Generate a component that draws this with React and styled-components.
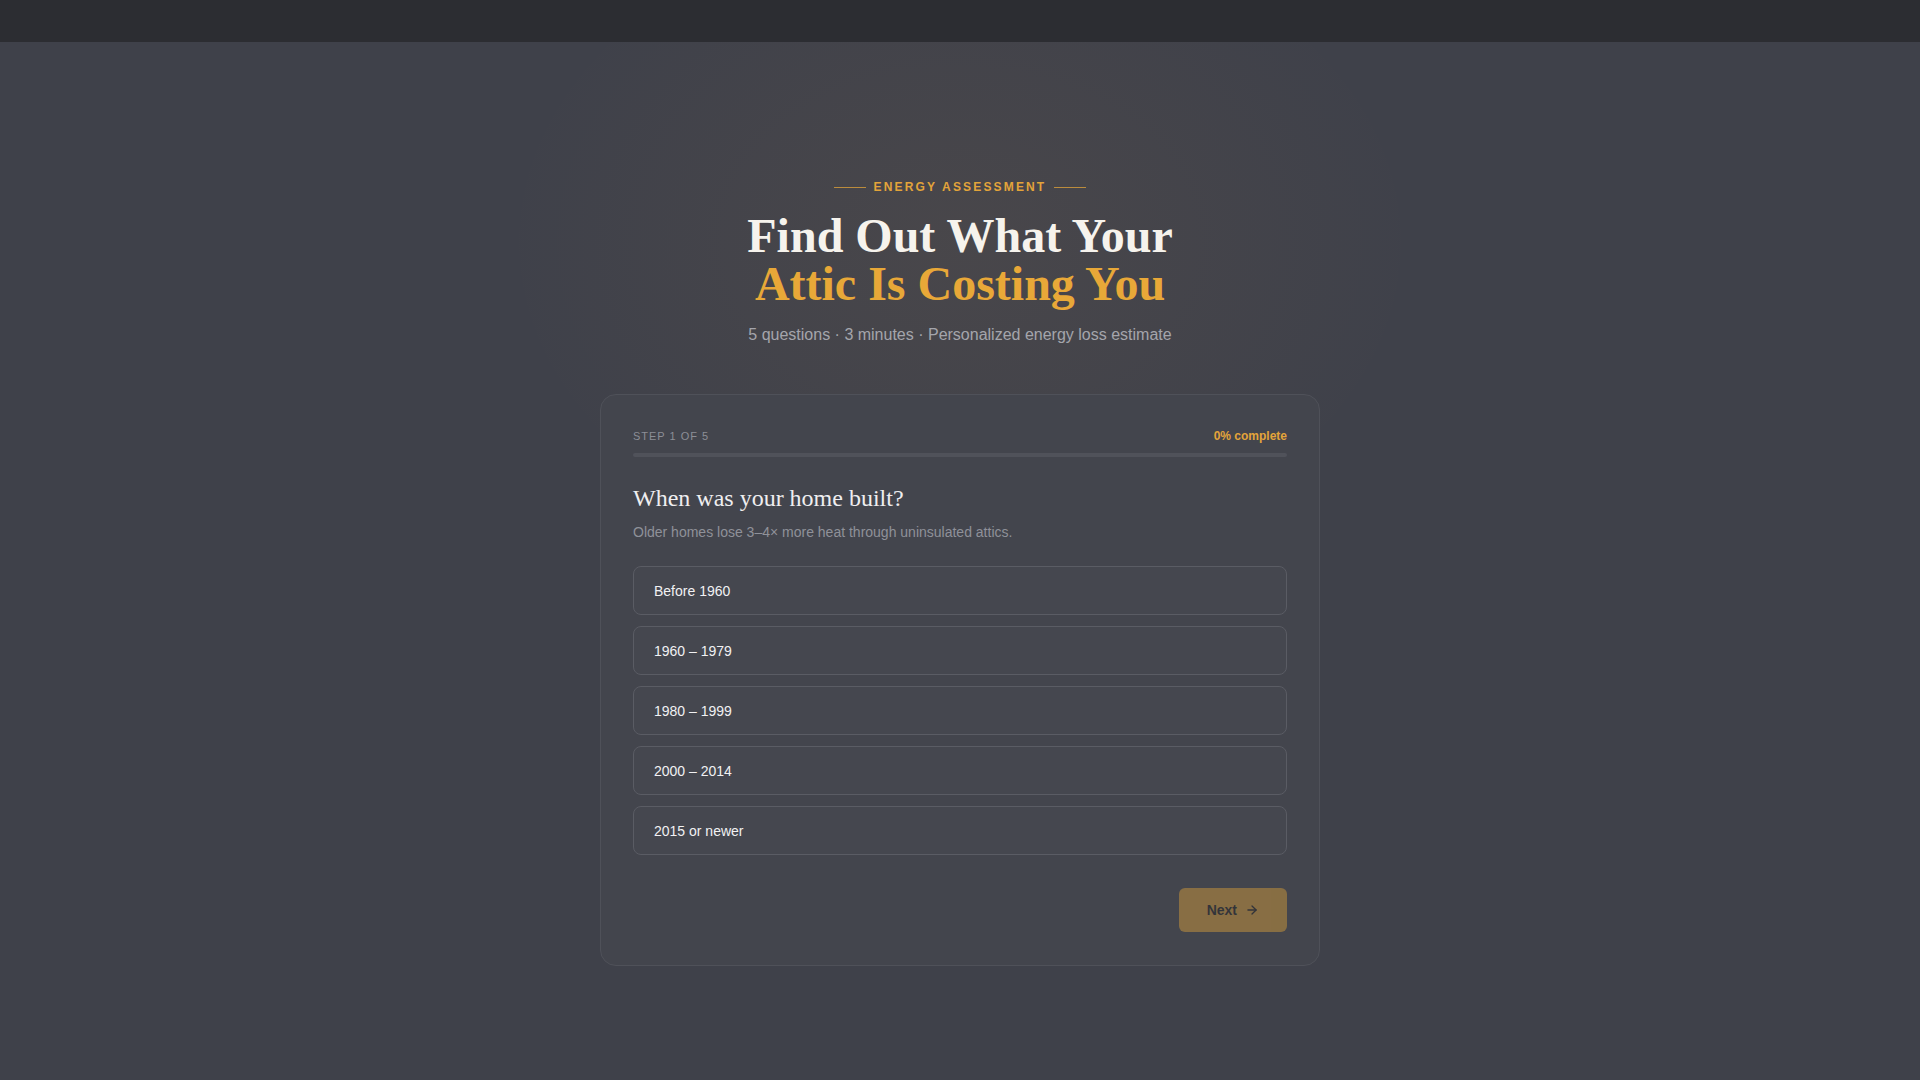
import React, { useState } from 'react';
import styled, { createGlobalStyle } from 'styled-components';
import { ArrowRight } from 'lucide-react';

const GlobalStyle = createGlobalStyle`
  * { box-sizing: border-box; }
  html, body {
    margin: 0;
    padding: 0;
    background: #3f414a;
    font-family: "Liberation Sans", Arial, sans-serif;
  }
`;

const Page = styled.div`
  min-height: 100vh;
  display: flex;
  flex-direction: column;
  background: #3f414a;
`;

const TopBar = styled.header`
  height: 42px;
  background: #2c2d32;
  flex-shrink: 0;
`;

const Main = styled.main`
  display: flex;
  flex-direction: column;
  align-items: center;
  padding: 0 0 80px;
  background: radial-gradient(
    ellipse 460px 340px at 50% 200px,
    rgba(226, 160, 80, 0.06) 0%,
    rgba(226, 160, 80, 0.03) 50%,
    rgba(226, 160, 80, 0) 100%
  );
`;

const Hero = styled.section`
  display: flex;
  flex-direction: column;
  align-items: center;
  padding-top: 137px;
  text-align: center;
`;

const Eyebrow = styled.div`
  display: flex;
  align-items: center;
  gap: 8px;
  font-size: 12px;
  line-height: 16px;
  font-weight: 700;
  letter-spacing: 0.18em;
  color: #e3a43a;
  text-transform: uppercase;

  &::before,
  &::after {
    content: '';
    width: 32px;
    height: 1px;
    background: rgba(227, 164, 58, 0.75);
  }
`;

const Title = styled.h1`
  margin: 17px 0 0;
  font-family: "Liberation Serif", "Times New Roman", serif;
  font-size: 48px;
  line-height: 1;
  font-weight: 700;
  color: #f6f3ed;
`;

const Accent = styled.span`
  display: block;
  color: #e8a838;
`;

const Subtitle = styled.p`
  margin: 15px 0 0;
  font-size: 16px;
  line-height: 24px;
  color: #a4a5ac;
`;

const Card = styled.div`
  margin-top: 47px;
  width: 720px;
  padding: 32px 32px 33px;
  background: #43454d;
  border: 1px solid #4f5159;
  border-radius: 16px;
`;

const StepRow = styled.div`
  display: flex;
  justify-content: space-between;
  align-items: center;
  height: 18px;
`;

const StepLabel = styled.span`
  font-size: 11px;
  letter-spacing: 0.09em;
  text-transform: uppercase;
  color: #8c8e96;
`;

const Percent = styled.span`
  font-size: 12px;
  font-weight: 700;
  color: #e3a43a;
`;

const Track = styled.div`
  margin-top: 8px;
  height: 4px;
  border-radius: 2px;
  background: #50525a;
  overflow: hidden;
`;

const Fill = styled.div`
  height: 100%;
  background: #e8a838;
  border-radius: 2px;
`;

const Question = styled.h2`
  margin: 26px 0 0;
  font-family: "Liberation Serif", "Times New Roman", serif;
  font-size: 24px;
  line-height: 1.3;
  font-weight: 400;
  color: #efeef0;
`;

const Hint = styled.p`
  margin: 8px 0 0;
  font-size: 14px;
  line-height: 20px;
  color: #8f9199;
`;

const Options = styled.div`
  margin-top: 24px;
  display: flex;
  flex-direction: column;
  gap: 11px;
`;

const Option = styled.button`
  display: flex;
  align-items: center;
  width: 100%;
  height: 49px;
  padding: 0 20px;
  font-family: inherit;
  font-size: 14px;
  color: #f1f1f3;
  text-align: left;
  background: ${p => (p.selected ? 'rgba(232, 168, 56, 0.12)' : '#45474f')};
  border: 1px solid ${p => (p.selected ? '#e8a838' : '#5a5c64')};
  border-radius: 8px;
  cursor: pointer;
`;

const Footer = styled.div`
  margin-top: 33px;
  display: flex;
  justify-content: flex-end;
`;

const NextButton = styled.button`
  display: flex;
  align-items: center;
  gap: 8px;
  height: 44px;
  padding: 0 28px;
  font-family: inherit;
  font-size: 14px;
  font-weight: 700;
  color: #1d1d20;
  background: #e8a838;
  border: none;
  border-radius: 6px;
  opacity: ${p => (p.disabled ? 0.42 : 1)};
  cursor: ${p => (p.disabled ? 'not-allowed' : 'pointer')};
`;

const choices = ['Before 1960', '1960 – 1979', '1980 – 1999', '2000 – 2014', '2015 or newer'];

const App = () => {
  const [selected, setSelected] = useState(null);
  const progress = 0;

  return (
    <Page>
      <GlobalStyle />
      <TopBar />
      <Main>
        <Hero>
          <Eyebrow>Energy Assessment</Eyebrow>
          <Title>
            Find Out What Your
            <Accent>Attic Is Costing You</Accent>
          </Title>
          <Subtitle>5 questions · 3 minutes · Personalized energy loss estimate</Subtitle>
        </Hero>

        <Card>
          <StepRow>
            <StepLabel>Step 1 of 5</StepLabel>
            <Percent>{progress}% complete</Percent>
          </StepRow>
          <Track>
            <Fill style={{ width: `${progress}%` }} />
          </Track>

          <Question>When was your home built?</Question>
          <Hint>Older homes lose 3–4× more heat through uninsulated attics.</Hint>

          <Options>
            {choices.map(choice => (
              <Option
                key={choice}
                selected={selected === choice}
                onClick={() => setSelected(choice)}
              >
                {choice}
              </Option>
            ))}
          </Options>

          <Footer>
            <NextButton disabled={!selected}>
              Next
              <ArrowRight size={14} strokeWidth={2.25} />
            </NextButton>
          </Footer>
        </Card>
      </Main>
    </Page>
  );
};

export default App;
